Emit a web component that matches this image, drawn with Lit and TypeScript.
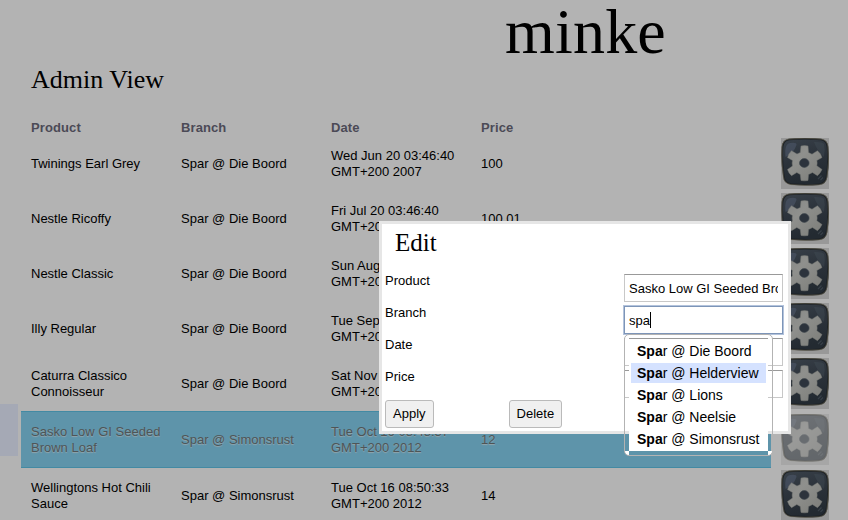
import { LitElement, html, css } from "lit";
import { customElement, property } from "lit/decorators.js";
import { classMap } from "lit/directives/class-map.js";

interface Row { product: string; branch: string; date: string; price: string; selected?: boolean }

const rows: Row[] = [
  { product: "Twinings Earl Grey", branch: "Spar @ Die Boord", date: "Wed Jun 20 03:46:40 GMT+200 2007", price: "100" },
  { product: "Nestle Ricoffy", branch: "Spar @ Die Boord", date: "Fri Jul 20 03:46:40 GMT+200 2007", price: "100.01" },
  { product: "Nestle Classic", branch: "Spar @ Die Boord", date: "Sun Aug 19 03:46:40 GMT+200 2007", price: "100" },
  { product: "Illy Regular", branch: "Spar @ Die Boord", date: "Tue Sep 18 03:46:40 GMT+200 2007", price: "100" },
  { product: "Caturra Classico Connoisseur", branch: "Spar @ Die Boord", date: "Sat Nov 17 03:46:40 GMT+200 2007", price: "100" },
  { product: "Sasko Low GI Seeded Brown Loaf", branch: "Spar @ Simonsrust", date: "Tue Oct 16 08:48:37 GMT+200 2012", price: "12", selected: true },
  { product: "Wellingtons Hot Chili Sauce", branch: "Spar @ Simonsrust", date: "Tue Oct 16 08:50:33 GMT+200 2012", price: "14" },
];

@customElement("gear-button")
class GearButton extends LitElement {
  @property({ type: Boolean, reflect: true }) faded = false;
  static styles = css`
    :host { display: block; width: 48px; height: 51px; background: #989898; }
    :host([faded]) { background: #a6a6a6; }
    :host([faded]) svg { opacity: .5; }
    svg { display: block; }
  `;
  render() {
    return html`<svg width="48" height="51" viewBox="0 0 48 51">
      <defs>
        <linearGradient id="face" x1="0" y1="0" x2="0.3" y2="1">
          <stop offset="0" stop-color="#39414a"/><stop offset=".5" stop-color="#2c333b"/><stop offset="1" stop-color="#232a31"/>
        </linearGradient>
        <linearGradient id="metal" x1="0" y1="0" x2="1" y2="1">
          <stop offset="0" stop-color="#858785"/><stop offset=".35" stop-color="#8f908d"/><stop offset="1" stop-color="#7c7d79"/>
        </linearGradient>
      </defs>
      <path d="M8 1.500Q24 0 40 1.500Q46 2.500 46.500 9Q48 24 45.500 39Q44.500 45.500 38 46.200Q24 47.500 10 46Q3.500 45 3 39Q.5 24 1.500 9Q2 2.500 8 1.500Z" fill="url(#face)" stroke="#1d2125" stroke-width="1.600"/>
      <path d="M8 1Q24-.5 40 1Q46.500 2 47 9Q48.500 24 46 39Q45 46 38 46.800Q24 48 10 46.600Q3 45.500 2.500 39Q0 24 1 9Q1.500 2 8 1Z" fill="none" stroke="#6a6553" stroke-width=".6"/>
      <path d="M33 4Q41 3.500 43 6Q44.500 12 43 19Q36 13 33 4Z" fill="#48525c" opacity=".35"/>
      <path d="M4.500 19Q3 6 9 5Q16 4 15.500 7Q13 15 4.500 19Z" fill="#4d5769" opacity=".6"/>
      <path d="M37 41L40.500 37.500M39.500 42L42 39.500" stroke="#4b555e" stroke-width="1.300" opacity=".5"/>
      <path d="M20 8Q23.500 7.200 27 8L27.500 14.500L31 16.200L36.500 12.700Q40 15.500 41 19.500L35.800 22.500Q36.500 25 35.800 27.800L41 31.500Q39.500 35 36.500 37.700L31.500 34.500L27.500 36.500L27 42.500Q23.500 43.200 20 42.500L19.300 36.500L15.800 34.500L10.500 37.700Q7.500 35 6.500 31.500L11.500 28Q10.800 25 11.500 22.500L6.500 19.500Q7.500 15.500 10.500 12.700L16 16L19.300 14.500Z" fill="url(#metal)" stroke="#747672" stroke-width=".5" stroke-linejoin="round"/>
      <ellipse cx="23.300" cy="25" rx="4.800" ry="4.400" fill="#2c333c" stroke="#3d444b" stroke-width=".6"/>
    </svg>`;
  }
}

@customElement("edit-dialog")
class EditDialog extends LitElement {
  static styles = css`
    :host { display: block; box-sizing: border-box; width: 412px; height: 213px; border: 3px solid #e6e6e6; background: #fff; padding: 2px 3px; }
    h2 { margin: 0 0 15px 10px; font: 400 25px/33px "Liberation Serif", serif; }
    .field { display: flex; justify-content: space-between; height: 32px; padding-right: 2px; }
    label { line-height: 14px; }
    .box { box-sizing: border-box; position: relative; width: 159px; height: 28px; border: 1px solid #c8c8c8; border-top-color: #999; padding: 0 4px; line-height: 27px; }
    .value { overflow: hidden; white-space: nowrap; }
    .active { border-color: #7d95b8; box-shadow: 0 0 0 1px #b3c3dc; line-height: 28px; }
    .caret { display: inline-block; width: 1px; height: 16px; background: #000; vertical-align: -3px; }
    .actions { display: flex; gap: 75px; margin-top: -2px; }
    button { box-sizing: border-box; height: 28px; padding: 0 7px; border: 1px solid #bababa; border-radius: 3px; background: #f0f0f0; color: #000; font: inherit; }
    .menu {
      position: absolute; left: -1px; top: 27px; z-index: 1; box-sizing: border-box; width: 149px; height: 122px;
      border: 1px solid #b3b3b3; border-radius: 5px; padding: 4px;
      background: linear-gradient(#fff, #fff) 0 0 / 4px 4px, linear-gradient(#fff, #fff) 100% 0 / 4px 4px,
        linear-gradient(#fff, #fff) 0 100% / 4px 4px, linear-gradient(#fff, #fff) 100% 100% / 4px 4px;
      background-repeat: no-repeat;
    }
    .list { background: #fff; padding: 1px 2px; height: 112px; box-sizing: border-box; font-size: 14px; line-height: 20px; }
    .item { height: 20px; margin-top: 2px; padding-left: 6px; white-space: nowrap; }
    .item:first-child { margin-top: 1px; }
    .hot { background: #d5e2ff; }
  `;
  render() {
    const item = (name: string, hot = false) => html`<div class=${classMap({ item: true, hot })}><b>Spa</b>r @ ${name}</div>`;
    return html`
      <h2>Edit</h2>
      <div class="field"><label>Product</label><div class="box"><div class="value">Sasko Low GI Seeded Brown Loaf</div></div></div>
      <div class="field"><label>Branch</label><div class="box active">spa<span class="caret"></span>
        <div class="menu"><div class="list">
          ${item("Die Boord")}${item("Helderview", true)}${item("Lions")}${item("Neelsie")}${item("Simonsrust")}
        </div></div></div></div>
      <div class="field"><label>Date</label><div class="box"></div></div>
      <div class="field"><label>Price</label><div class="box"></div></div>
      <div class="actions"><button>Apply</button><button>Delete</button></div>`;
  }
}

@customElement("app-root")
class AppRoot extends LitElement {
  static styles = css`
    :host { display: block; position: relative; width: 848px; height: 520px; overflow: hidden; background: #b3b3b3; color: #000; font: 13px/16px "Liberation Sans", Arial, sans-serif; }
    header { height: 64px; padding-left: 505px; font: 64px/64px "Liberation Serif", serif; letter-spacing: .2px; }
    h1 { margin: 0 0 0 31px; height: 55px; font: 400 26px/32px "Liberation Serif", serif; }
    .line { display: flex; align-items: center; gap: 10px; }
    .tab { width: 18px; height: 52px; margin-right: -7px; }
    .row { display: grid; grid-template-columns: repeat(3, 150px) 300px; align-items: center; box-sizing: border-box; height: 55px; width: 750px; }
    .cell { padding: 0 10px; }
    .head { margin-left: 21px; height: 17px; color: #4b4a56; font-weight: 700; letter-spacing: .1px; }
    .selected .row { height: 57px; background: #5e94aa; border: solid #438aa3; border-width: 1px 0; color: #4e5557; text-shadow: 0 1px 1px #94a6ad; }
    .selected .tab { background: #a5a9b5; align-self: flex-start; margin-top: -7px; }
    edit-dialog { position: absolute; left: 379px; top: 221px; }
  `;
  render() {
    return html`
      <header>minke</header>
      <h1>Admin View</h1>
      <div class="row head"><div class="cell">Product</div><div class="cell">Branch</div><div class="cell">Date</div><div class="cell">Price</div></div>
      ${rows.map(r => html`<div class=${classMap({ line: true, selected: !!r.selected })}>
        <div class="tab"></div>
        <div class="row"><div class="cell">${r.product}</div><div class="cell">${r.branch}</div><div class="cell">${r.date}</div><div class="cell">${r.price}</div></div>
        <gear-button ?faded=${!!r.selected}></gear-button>
      </div>`)}
      <edit-dialog></edit-dialog>`;
  }
}
